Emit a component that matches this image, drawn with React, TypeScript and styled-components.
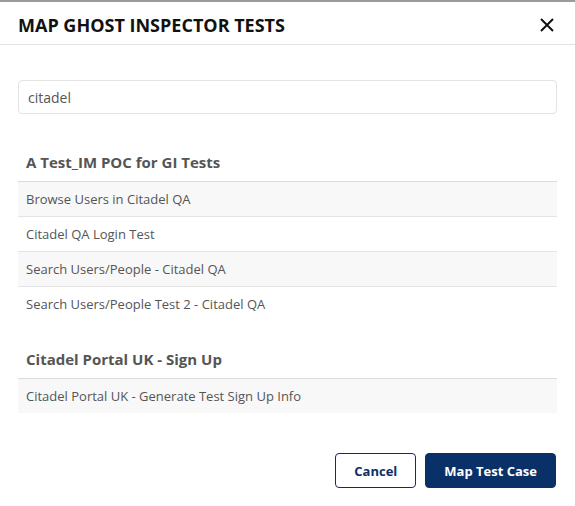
import React from 'react';
import styled, { createGlobalStyle } from 'styled-components';

const groups = [
  {
    name: 'A Test_IM POC for GI Tests',
    tests: [
      'Browse Users in Citadel QA',
      'Citadel QA Login Test',
      'Search Users/People - Citadel QA',
      'Search Users/People Test 2 - Citadel QA',
    ],
  },
  {
    name: 'Citadel Portal UK - Sign Up',
    tests: ['Citadel Portal UK - Generate Test Sign Up Info'],
  },
];

function App() {
  return (
    <Modal>
      <GlobalStyle />
      <Header>
        <Title>MAP GHOST INSPECTOR TESTS</Title>
        <Close aria-label="close">
          <svg width="14" height="14" viewBox="0 0 14 14">
            <path d="M1 1L13 13M13 1L1 13" stroke="#111" strokeWidth="2" />
          </svg>
        </Close>
      </Header>
      <Body>
        <Search defaultValue="citadel" />
        {groups.map((g) => (
          <Group key={g.name}>
            <GroupName>{g.name}</GroupName>
            <List>
              {g.tests.map((t, i) => (
                <Row key={t} striped={i % 2 === 0}>{t}</Row>
              ))}
            </List>
          </Group>
        ))}
      </Body>
      <Footer>
        <Button>Cancel</Button>
        <Button primary>Map Test Case</Button>
      </Footer>
    </Modal>
  );
}

const GlobalStyle = createGlobalStyle`
  body {
    margin: 0;
    background: #fff;
    font-family: "Open Sans", "Noto Sans", sans-serif;
  }
`;

const Modal = styled.div`
  width: 575px;
  height: 506px;
  box-sizing: border-box;
  border-top: 2px solid #9a9a9a;
  display: flex;
  flex-direction: column;
`;

const Header = styled.div`
  height: 38px;
  padding: 4px 18px 0 18px;
  border-bottom: 1px solid #e2e2e2;
  display: flex;
  align-items: center;
  justify-content: space-between;
`;

const Title = styled.h1`
  margin: 0;
  font-size: 18px;
  font-weight: 700;
  color: #111;
`;

const Close = styled.button`
  border: none;
  background: none;
  padding: 0;
  margin-right: 3px;
  display: flex;
  cursor: pointer;
`;

const Body = styled.div`
  padding: 35px 18px 0 18px;
  flex: 1;
`;

const Search = styled.input`
  width: 100%;
  box-sizing: border-box;
  height: 34px;
  border: 1px solid #e3e3e3;
  border-radius: 4px;
  padding: 0 9px;
  font-family: "Open Sans", sans-serif;
  font-size: 14px;
  color: #555;
  outline: none;
`;

const Group = styled.div`
  margin-top: 38px;
  & + & {
    margin-top: 28px;
  }
`;

const GroupName = styled.div`
  padding: 0 8px;
  font-size: 15px;
  font-weight: 700;
  color: #555;
  line-height: 20px;
  margin-bottom: 9px;
`;

const List = styled.div`
  border-top: 1px solid #dcdcdc;
`;

const Row = styled.div<{ striped?: boolean }>`
  height: 34px;
  line-height: 34px;
  padding: 0 8px;
  font-size: 13px;
  color: #555;
  background: ${(p) => (p.striped ? '#f8f8f8' : '#fff')};
  & + & {
    border-top: 1px solid #e4e4e4;
  }
`;

const Footer = styled.div`
  display: flex;
  justify-content: flex-end;
  gap: 9px;
  padding: 0 19px 18px 0;
`;

const Button = styled.button<{ primary?: boolean }>`
  height: 35px;
  padding: 0 18px;
  border-radius: 4px;
  border: 1px solid #0a3068;
  background: ${(p) => (p.primary ? '#0a3068' : '#fff')};
  color: ${(p) => (p.primary ? '#fff' : '#0a3068')};
  font-family: "Open Sans", sans-serif;
  font-size: 13px;
  font-weight: 700;
  cursor: pointer;
`;

export default App;
